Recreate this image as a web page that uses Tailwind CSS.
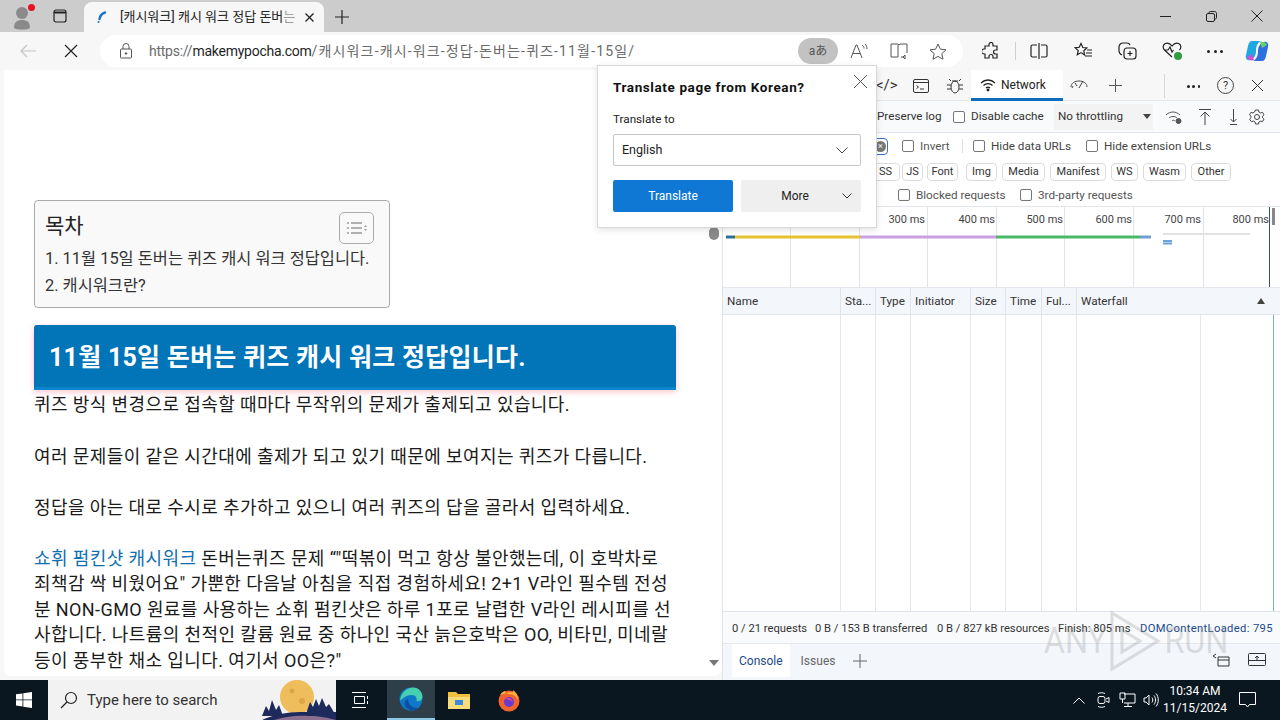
<!DOCTYPE html>
<html lang="ko">
<head>
<meta charset="UTF-8">
<title>캐시워크</title>
<script src="https://cdn.jsdelivr.net/npm/@tailwindcss/browser@4"></script>
</head>
<body class="w-[1280px] h-[720px] overflow-hidden relative flex flex-col bg-[#f7f7f7] font-['Roboto','Noto_Sans_CJK_KR',sans-serif]">

<!-- Tab strip -->
<div class="h-[32px] shrink-0 bg-[#cccccc] flex items-end relative">
  <div class="w-[84px] h-[32px] flex items-center pl-[10px] gap-[18px]">
    <div class="relative w-[24px] h-[24px]">
      <svg width="24" height="26" viewBox="0 0 24 26" fill="#8a8a8a"><circle cx="12" cy="9" r="6"/><path d="M4 24c0-6 3-8 8-8s8 2 8 8c-3 2-13 2-16 0z"/></svg>
      <span class="absolute top-0 right-[-1px] w-[7px] h-[7px] rounded-full bg-[#e81123]"></span>
    </div>
    <svg width="16" height="16" viewBox="0 0 16 16" fill="none" stroke="#222" stroke-width="1.2"><rect x="2" y="2" width="12" height="12" rx="2"/><path d="M2 4.500h12" stroke-width="2"/></svg>
  </div>
  <div class="w-[240px] h-[30px] bg-[#f7f7f7] rounded-t-[8px] flex items-center pl-[10px] pr-[9px]">
    <svg width="16" height="16" viewBox="0 0 16 16" fill="none" class="shrink-0"><path d="M5.500 10C6 7 8 4.500 11 3.500" stroke="#1a73c8" stroke-width="2.400" stroke-linecap="round"/><circle cx="4.500" cy="13" r="1" fill="#1a73c8"/></svg>
    <span class="ml-[10px] w-[176px] overflow-hidden whitespace-nowrap text-[13px] text-[#222]">[캐시워크] 캐시 워크 정답 돈버<span class="text-[#999]">는</span></span>
    <svg width="11" height="11" viewBox="0 0 11 11" stroke="#222" stroke-width="1.3" class="ml-[8px] shrink-0"><path d="M1.500 1.500l8 8M9.500 1.500l-8 8"/></svg>
  </div>
  <div class="w-[36px] h-[30px] flex items-center justify-center">
    <svg width="14" height="14" viewBox="0 0 14 14" stroke="#222" stroke-width="1.2"><path d="M7 0v14M0 7h14"/></svg>
  </div>
  <div class="ml-auto flex h-[32px]">
    <div class="w-[46px] flex items-center justify-center"><svg width="11" height="11" viewBox="0 0 11 11" stroke="#222"><path d="M0 5.500h11"/></svg></div>
    <div class="w-[46px] flex items-center justify-center"><svg width="11" height="11" viewBox="0 0 11 11" fill="none" stroke="#222"><rect x=".5" y="2.500" width="8" height="8" rx="1.500"/><path d="M3 2.500V1.800C3 1 3.500.5 4.300.5h4.200c1.200 0 2 .8 2 2v4.200c0 .8-.5 1.300-1.500 1.300"/></svg></div>
    <div class="w-[46px] flex items-center justify-center"><svg width="12" height="12" viewBox="0 0 12 12" stroke="#222"><path d="M.5.500l11 11M11.500.5l-11 11"/></svg></div>
  </div>
</div>

<!-- Address bar row -->
<div class="h-[38px] shrink-0 flex items-center bg-[#f7f7f7]">
  <div class="w-[56px] flex justify-center">
    <svg width="18" height="16" viewBox="0 0 18 16" fill="none" stroke="#c4c4c4" stroke-width="1.2"><path d="M17 8H2M8 2L2 8l6 6"/></svg>
  </div>
  <div class="w-[30px] flex justify-center">
    <svg width="14" height="14" viewBox="0 0 14 14" stroke="#222" stroke-width="1.2"><path d="M1 1l12 12M13 1L1 13"/></svg>
  </div>
  <div class="ml-[14px] w-[863px] h-[32px] rounded-full bg-white flex items-center pl-[19px] pr-[16px]">
    <svg width="14" height="16" viewBox="0 0 14 16" fill="none" stroke="#555" stroke-width="1"><rect x="1.500" y="6" width="11" height="9" rx="1"/><path d="M4 6V3.500a3 3 0 0 1 6 0V6"/><circle cx="7" cy="10.500" r=".8" fill="#555"/></svg>
    <span class="ml-[16px] text-[14px] whitespace-nowrap text-[#6b6b6b] tracking-[-0.25px]">https://<span class="text-[#1f1f1f]">makemypocha.com</span><span class="tracking-[1.150px]">/캐시워크-캐시-워크-정답-돈버는-퀴즈-11월-15일/</span></span>
    <div class="ml-auto w-[40px] h-[26px] rounded-full bg-[#c2c2c2] text-[12px] text-[#555] flex items-center justify-center">aあ</div>
    <svg class="ml-[12px]" width="18" height="16" viewBox="0 0 18 16" fill="none" stroke="#555"><path d="M1 15L6 2h1l5 13M3 10.500h7M12 2c1.500 1 2 2 2 3.500M15 1c1.500 1.500 2 3 2 5"/></svg>
    <svg class="ml-[22px]" width="18" height="16" viewBox="0 0 18 16" fill="none" stroke="#555"><path d="M1 1h7l1 1 1-1h7v9M1 1v13h7V2M11 14l2 0 2-2v4l-2-2"/></svg>
    <svg class="ml-[21px]" width="18" height="17" viewBox="0 0 18 17" fill="none" stroke="#555"><path d="M9 1l2.400 5.200 5.600.6-4.200 3.800 1.200 5.600L9 13.400 4 16.200l1.200-5.600L1 6.800l5.600-.6z"/></svg>
  </div>
  <div class="flex items-center ml-[19px] text-[#222]">
    <svg width="18" height="18" viewBox="0 0 18 18" fill="none" stroke="#222" stroke-width="1.2"><path d="M7 2.500a2 2 0 0 1 4 0V4h4v4h-1.500a2 2 0 0 0 0 4H15v4h-4v-1.500a2 2 0 0 0-4 0V16H3v-4H2a2.500 2.500 0 0 1 0-5h1V4h4z"/></svg>
    <span class="ml-[15px] w-px h-[18px] bg-[#d0d0d0]"></span>
    <svg class="ml-[14px]" width="18" height="16" viewBox="0 0 18 16" fill="none" stroke="#222" stroke-width="1.2"><path d="M9 0v16M7 2H2.500C1.500 2 1 2.500 1 3.500v9c0 1 .5 1.500 1.500 1.500H7M11 2h4.500c1 0 1.500.5 1.500 1.500v9c0 1-.5 1.500-1.500 1.500H11"/></svg>
    <svg class="ml-[26px]" width="19" height="18" viewBox="0 0 19 18" fill="none" stroke="#222" stroke-width="1.2"><path d="M7 1.500l1.800 4 4 .5-3 2.800.8 4.200L7 10.600 3.300 12.800l.9-4.200-3-2.800 4-.5zM13 8h5M12 11h6M11 14h7"/></svg>
    <svg class="ml-[25px]" width="19" height="18" viewBox="0 0 19 18" fill="none" stroke="#222" stroke-width="1.2"><rect x="6" y="6" width="12" height="11" rx="3"/><path d="M12 9v5M9.500 11.500h5M4 13C2 12 1 11 1 9V5c0-2 1.500-4 4-4h4c1.500 0 2.500.7 3 2"/></svg>
    <div class="ml-[25px] relative w-[20px] h-[18px]">
      <svg width="20" height="16" viewBox="0 0 20 16" fill="none" stroke="#222" stroke-width="1.2"><path d="M10 15L2.500 8C.5 6 .8 3 3 1.800 5.500.4 8 1.500 10 4c2-2.500 4.500-3.600 7-2.200C19.200 3 19.500 6 17.500 8M2 8h4l2-3 2 5 1.500-2"/></svg>
      <span class="absolute right-0 bottom-0 w-[8px] h-[8px] rounded-full bg-[#2e9e46]"></span>
    </div>
    <div class="ml-[25px] w-[16px] flex justify-between">
      <span class="w-[3px] h-[3px] rounded-full bg-[#222]"></span><span class="w-[3px] h-[3px] rounded-full bg-[#222]"></span><span class="w-[3px] h-[3px] rounded-full bg-[#222]"></span>
    </div>
    <svg class="ml-[22px]" width="24" height="24" viewBox="0 0 24 24"><path d="M7 2h9c-4 2-5 6-5 10s-2 8-6 9c-3 1-5-2-4-5l2-9c.5-3 2-5 4-5z" fill="#1ea7e0"/><path d="M17 22H8c4-2 5-6 5-10s2-8 6-9c3-1 5 2 4 5l-2 9c-.5 3-2 5-4 5z" fill="#2b6fe0"/><path d="M15 3c3-1 6 0 7 3l-5 3z" fill="#6ad06a"/><path d="M9 21c-3 1-6 0-7-3l5-3z" fill="#d04fd8"/></svg>
  </div>
</div>

<!-- Main area -->
<div class="flex-1 min-h-0 flex">

  <!-- Web page -->
  <div class="w-[722px] pl-[4px] pb-[4px] shrink-0 flex">
    <div class="flex-1 bg-white rounded-b-[8px] flex overflow-hidden">
      <article class="w-[702px] shrink-0 pl-[30px] pr-[30px] pt-[130px] text-[18px] tracking-[0.4px] leading-[25.5px] text-[#1a1a1a]">
        <nav class="w-[356px] h-[108px] bg-[#f9f9f9] border border-[#aaaaaa] rounded-[4px] pl-[10px] pr-[15px] pt-[11px] tracking-normal">
          <div class="flex items-start justify-between h-[33px]">
            <span class="text-[21px] leading-[28px] text-[#222]">목차</span>
            <span class="w-[35px] h-[32px] border border-[#aaaaaa] rounded-[5px] flex items-center justify-center gap-[3px]">
              <svg width="20" height="14" viewBox="0 0 20 14" stroke="#999" stroke-width="1.400"><path d="M0 2h2M4 2h11M0 7h2M4 7h11M0 12h2M4 12h11"/><path d="M17 6l1.500-2L20 6zM17 8l1.500 2L20 8z" fill="#999" stroke="none"/></svg>
            </span>
          </div>
          <div class="text-[16.400px] leading-[27px] text-[#333] whitespace-nowrap">
            <div>1. 11월 15일 돈버는 퀴즈 캐시 워크 정답입니다.</div>
            <div>2. 캐시워크란?</div>
          </div>
        </nav>
        <h2 class="mt-[17px] h-[65px] bg-[#0274b8] border-b-[3px] border-[#0a86cf] rounded-t-[3px] pl-[15px] pt-[4px] flex items-center text-white font-bold text-[25px] tracking-[0.25px] shadow-[0_2px_6px_rgba(255,90,120,0.35)] whitespace-nowrap">11월 15일 돈버는 퀴즈 캐시 워크 정답입니다.</h2>
        <p class="pt-[2px] whitespace-nowrap">퀴즈 방식 변경으로 접속할 때마다 무작위의 문제가 출제되고 있습니다.</p>
        <p class="mt-[26px] whitespace-nowrap">여러 문제들이 같은 시간대에 출제가 되고 있기 때문에 보여지는 퀴즈가 다릅니다.</p>
        <p class="mt-[25.5px] whitespace-nowrap">정답을 아는 대로 수시로 추가하고 있으니 여러 퀴즈의 답을 골라서 입력하세요.</p>
        <p class="mt-[25.5px] whitespace-nowrap"><a href="#" class="text-[#0f6fb0]">쇼휘 펌킨샷 캐시워크</a> 돈버는퀴즈 문제 “"떡볶이 먹고 항상 불안했는데, 이 호박차로<br>죄책감 싹 비웠어요" 가뿐한 다음날 아침을 직접 경험하세요! 2+1 V라인 필수템 전성<br>분 NON-GMO 원료를 사용하는 쇼휘 펌킨샷은 하루 1포로 날렵한 V라인 레시피를 선<br>사합니다. 나트륨의 천적인 칼륨 원료 중 하나인 국산 늙은호박은 OO, 비타민, 미네랄<br>등이 풍부한 채소 입니다. 여기서 OO은?"</p>
      </article>
      <!-- Page scrollbar -->
      <div class="w-[15px] shrink-0 flex flex-col items-center relative">
        <div class="mt-[157px] w-[10px] h-[13px] rounded-[5px] bg-[#8a8a8a]"></div>
        <div class="mt-auto mb-[10px] w-0 h-0 border-x-[5px] border-x-transparent border-t-[6px] border-t-[#777]"></div>
      </div>
    </div>
  </div>

  <!-- DevTools -->
  <div class="flex-1 min-w-0 flex flex-col text-[11.700px] text-[#333] border-l border-[#dfe3ea]">
    <!-- panel tabs -->
    <div class="h-[31px] shrink-0 flex items-center bg-[#f7f7f7] relative border-b border-[#e3e6ec]">
      <span class="ml-[153px] text-[15px] text-[#333]">&lt;/&gt;</span>
      <svg class="absolute left-[190px] top-[8px]" width="16" height="16" viewBox="0 0 16 16" fill="none" stroke="#333"><rect x=".5" y="1.500" width="15" height="13" rx="1.500"/><path d="M.5 4.500h15M3.500 7.500l2 1.500-2 1.500M7 11h4"/></svg>
      <svg class="absolute left-[223px] top-[7px]" width="18" height="18" viewBox="0 0 18 18" fill="none" stroke="#333"><ellipse cx="9" cy="10" rx="4" ry="6"/><path d="M6 4h6M5 8H1M5 12H1M13 8h4M13 12h4M5 4L3 2M13 4l2-2"/></svg>
      <div class="absolute left-[248px] top-0 w-[92px] h-[31px] bg-white border-b-[3px] border-[#0f6cbd] flex items-center pl-[9px] pt-[1px] gap-[5px]">
        <svg width="16" height="14" viewBox="0 0 16 14" fill="none" stroke="#222" stroke-width="1.300"><path d="M1 5c4-4 10-4 14 0M3.500 7.500c2.500-2.500 6.500-2.500 9 0M6 10c1-1 3-1 4 0"/><circle cx="8" cy="12" r=".8" fill="#222"/></svg>
        <span class="text-[#222] text-[12px]">Network</span>
      </div>
      <svg class="absolute left-[347px] top-[8px]" width="18" height="14" viewBox="0 0 18 14" fill="none" stroke="#444"><path d="M1 9c0-8 16-8 16 0M9 10l4-7M5 5l2 3M3 8l-1 2"/></svg>
      <svg class="absolute left-[386px] top-[9px]" width="13" height="13" viewBox="0 0 13 13" stroke="#555"><path d="M6.500 0v13M0 6.500h13"/></svg>
      <span class="absolute left-[441px] top-[4px] w-px h-[24px] bg-[#d5d8de]"></span>
      <div class="absolute left-[464px] top-[15px] w-[13px] flex justify-between">
        <span class="w-[2.500px] h-[2.500px] rounded-full bg-[#222]"></span><span class="w-[2.500px] h-[2.500px] rounded-full bg-[#222]"></span><span class="w-[2.500px] h-[2.500px] rounded-full bg-[#222]"></span>
      </div>
      <div class="absolute left-[494px] top-[7px] w-[17px] h-[17px] rounded-full border border-[#444] text-[11px] leading-[15px] text-center">?</div>
      <svg class="absolute left-[529px] top-[10px]" width="11" height="11" viewBox="0 0 11 11" stroke="#333"><path d="M0 0l11 11M11 0L0 11"/></svg>
    </div>
    <!-- record row -->
    <div class="h-[32px] shrink-0 flex items-center bg-[#f9fafc] border-b border-[#e3e6ec] whitespace-nowrap">
      <span class="ml-[154px] w-[64px] pt-[1px]">Preserve log</span>
      <span class="ml-[12px] w-[12px] h-[12px] border border-[#777] rounded-[2px] bg-white"></span>
      <span class="ml-[6px] w-[73px] pt-[1px]">Disable cache</span>
      <span class="ml-[10px] w-[99px] h-[26px] bg-[#f3f3f3] pl-[4px] pt-[1px] flex items-center">No throttling</span>
      <span class="w-0 h-0 -ml-[10px] border-x-[4px] border-x-transparent border-t-[5px] border-t-[#444]"></span>
      <svg class="ml-[14px]" width="18" height="14" viewBox="0 0 18 14" fill="none" stroke="#555"><path d="M1 5c4-4 10-4 14 0M4 8c2-2 6-2 8 0M7 11c1-1 2-1 3 0"/><circle cx="13.500" cy="11" r="2.500" fill="#555"/></svg>
      <svg class="ml-[16px]" width="12" height="16" viewBox="0 0 12 16" fill="none" stroke="#444"><path d="M0 .5h12M6 16V3M1.500 7.500L6 3l4.500 4.500"/></svg>
      <svg class="ml-[16px]" width="12" height="16" viewBox="0 0 12 16" fill="none" stroke="#444"><path d="M3 15.500h7M6.500 0v13M3.500 10l3 3 3-3"/></svg>
      <svg class="ml-[10px]" width="16" height="16" viewBox="0 0 16 16" fill="none" stroke="#444"><circle cx="8" cy="8" r="2.500"/><path d="M6.500 1h3l.4 2 1.800 1 1.800-.7 1.500 2.500-1.500 1.400v1.600l1.500 1.400-1.500 2.500-1.800-.7-1.800 1-.4 2h-3l-.4-2-1.800-1-1.800.7L.5 10.200 2 8.800V7.200L.5 5.800 2 3.300l1.800.7 1.800-1z"/></svg>
    </div>
    <!-- filter row -->
    <div class="h-[26px] shrink-0 flex items-center bg-white relative whitespace-nowrap text-[#444]">
      <div class="absolute left-[150px] top-[5px] w-[15px] h-[17px] border border-[#3b6fc4] rounded-[4px] flex items-center justify-end pr-[1px]">
        <span class="w-[11px] h-[11px] rounded-full bg-[#777] text-white text-[9px] leading-[11px] text-center">×</span>
      </div>
      <span class="ml-[179px] w-[12px] h-[12px] border border-[#777] rounded-[2px]"></span>
      <span class="ml-[6px] w-[30px] pt-[1px] text-[#555]">Invert</span>
      <span class="ml-[12px] w-px h-[14px] bg-[#e0e0e0]"></span>
      <span class="ml-[10px] w-[12px] h-[12px] border border-[#777] rounded-[2px]"></span>
      <span class="ml-[6px] w-[80px] pt-[1px]">Hide data URLs</span>
      <span class="ml-[15px] w-[12px] h-[12px] border border-[#777] rounded-[2px]"></span>
      <span class="ml-[6px] pt-[1px]">Hide extension URLs</span>
    </div>
    <!-- type chips -->
    <div class="h-[25px] shrink-0 flex items-center bg-white pl-[140px] pt-[1px] text-[11px] whitespace-nowrap text-[#333]">
      <span class="w-[37px] h-[18px] pr-[7px] flex items-center justify-end border border-[#dcdcdc] rounded-[4px]">SS</span>
      <span class="ml-[2px] w-[21px] h-[18px] flex items-center justify-center border border-[#dcdcdc] rounded-[4px]">JS</span>
      <span class="ml-[4px] w-[31px] h-[18px] flex items-center justify-center border border-[#dcdcdc] rounded-[4px]">Font</span>
      <span class="ml-[8px] w-[31px] h-[18px] flex items-center justify-center border border-[#dcdcdc] rounded-[4px]">Img</span>
      <span class="ml-[5px] w-[43px] h-[18px] flex items-center justify-center border border-[#dcdcdc] rounded-[4px]">Media</span>
      <span class="ml-[5px] w-[56px] h-[18px] flex items-center justify-center border border-[#dcdcdc] rounded-[4px]">Manifest</span>
      <span class="ml-[5px] w-[27px] h-[18px] flex items-center justify-center border border-[#dcdcdc] rounded-[4px]">WS</span>
      <span class="ml-[5px] w-[43px] h-[18px] flex items-center justify-center border border-[#dcdcdc] rounded-[4px]">Wasm</span>
      <span class="ml-[5px] w-[40px] h-[18px] flex items-center justify-center border border-[#dcdcdc] rounded-[4px]">Other</span>
    </div>
    <!-- blocked row -->
    <div class="h-[23px] shrink-0 flex items-center bg-white whitespace-nowrap border-b border-[#e3e6ec] text-[#555]">
      <span class="ml-[175px] w-[12px] h-[12px] border border-[#777] rounded-[2px]"></span>
      <span class="ml-[6px] w-[89px] pt-[1px]">Blocked requests</span>
      <span class="ml-[15px] w-[12px] h-[12px] border border-[#777] rounded-[2px]"></span>
      <span class="ml-[6px] pt-[1px]">3rd-party requests</span>
    </div>
    <!-- timeline overview -->
    <div class="h-[81px] shrink-0 relative bg-white border-b border-[#e3e6ec] overflow-hidden">
      <svg width="557" height="81" viewBox="0 0 557 81" fill="none" class="absolute left-0 top-0">
        <g stroke="#e0e3ea"><path d="M67.500 0v81M136.500 0v81M204.500 0v81M273.500 0v81M341.500 0v81M410.500 0v81M480.500 0v81"/></g>
        <path d="M546.500 0v81" stroke="#3a4f7a"/>
        <path d="M3 30h9" stroke="#2f6f94" stroke-width="3"/>
        <path d="M12 30h125" stroke="#e6c22e" stroke-width="3"/>
        <path d="M137 30h136" stroke="#c9a0e0" stroke-width="3"/>
        <path d="M273 30h144" stroke="#4cb86a" stroke-width="3"/>
        <path d="M417 30h11" stroke="#6f9fd0" stroke-width="3"/>
        <path d="M440 34h9M440 36.500h9" stroke="#6aa0dc" stroke-width="2"/>
        <path d="M440 27h87" stroke="#e2e2e2" stroke-width="2"/>
        <rect x="549" y="1" width="3" height="17" fill="#888"/>
      </svg>
      <div class="absolute inset-0 text-[11px] text-[#444]">
        <span class="absolute right-[355px] top-[5px]">300 ms</span>
        <span class="absolute right-[285px] top-[5px]">400 ms</span>
        <span class="absolute right-[217px] top-[5px]">500 ms</span>
        <span class="absolute right-[148px] top-[5px]">600 ms</span>
        <span class="absolute right-[79px] top-[5px]">700 ms</span>
        <span class="absolute right-[11px] top-[5px]">800 ms</span>
      </div>
    </div>
    <!-- table header -->
    <div class="h-[27px] shrink-0 flex items-center bg-[#f3f6fb] border-b border-[#dfe3ea] text-[#333] whitespace-nowrap">
      <span class="w-[118px] pl-[4px] pt-[1px] h-full flex items-center border-r border-[#dfe3ea]">Name</span>
      <span class="w-[35px] pl-[4px] pt-[1px] h-full flex items-center border-r border-[#dfe3ea]">Sta...</span>
      <span class="w-[35px] pl-[4px] pt-[1px] h-full flex items-center border-r border-[#dfe3ea]">Type</span>
      <span class="w-[60px] pl-[4px] pt-[1px] h-full flex items-center border-r border-[#dfe3ea]">Initiator</span>
      <span class="w-[35px] pl-[4px] pt-[1px] h-full flex items-center border-r border-[#dfe3ea]">Size</span>
      <span class="w-[36px] pl-[4px] pt-[1px] h-full flex items-center border-r border-[#dfe3ea]">Time</span>
      <span class="w-[35px] pl-[4px] pt-[1px] h-full flex items-center border-r border-[#dfe3ea]">Ful...</span>
      <span class="flex-1 pl-[4px] pt-[1px]">Waterfall</span>
      <span class="mr-[15px] w-0 h-0 border-x-[4px] border-x-transparent border-b-[6px] border-b-[#444]"></span>
    </div>
    <!-- table body -->
    <div class="flex-1 min-h-0 flex bg-white border-b border-[#dfe3ea]">
      <span class="w-[118px] border-r border-[#e4e7ee]"></span>
      <span class="w-[35px] border-r border-[#e4e7ee]"></span>
      <span class="w-[35px] border-r border-[#e4e7ee]"></span>
      <span class="w-[60px] border-r border-[#e4e7ee]"></span>
      <span class="w-[35px] border-r border-[#e4e7ee]"></span>
      <span class="w-[36px] border-r border-[#e4e7ee]"></span>
      <span class="w-[35px] border-r border-[#e4e7ee]"></span>
      <span class="w-[124px] border-r border-[#e4e7ee]"></span>
      <span class="w-[73px] border-r border-[#7fa8d8]"></span>
    </div>
    <!-- status bar -->
    <div class="h-[32px] shrink-0 flex items-center gap-[8px] pl-[9px] pt-[3px] bg-[#f9fafc] border-b border-[#e3e6ec] whitespace-nowrap text-[11.200px] overflow-hidden">
      <span class="w-[75px]">0 / 21 requests</span><span class="w-[114px]">0 B / 153 B transferred</span><span class="w-[113px]">0 B / 827 kB resources</span><span class="w-[74px]">Finish: 805 ms</span><span class="text-[#1a4a8a] tracking-[0.35px]">DOMContentLoaded: 795</span>
    </div>
    <!-- drawer tabs -->
    <div class="h-[36px] shrink-0 flex items-center bg-[#f3f6fb] relative pb-[3px]">
      <span class="ml-[9px] h-[33px] px-[7px] flex items-center bg-white text-[#1a4a8a] text-[12px]">Console</span>
      <span class="ml-[11px] text-[#666] text-[12px]">Issues</span>
      <svg class="ml-[18px]" width="14" height="14" viewBox="0 0 14 14" stroke="#666"><path d="M7 0v14M0 7h14"/></svg>
      <svg class="absolute left-[489px] top-[8px]" width="18" height="15" viewBox="0 0 18 15" fill="none" stroke="#333"><path d="M6 5h11v9H6zM6 8h11M4 2L1 4l3 2"/></svg>
      <svg class="absolute left-[525px] top-[8px]" width="18" height="15" viewBox="0 0 18 15" fill="none" stroke="#333"><rect x=".5" y="1.500" width="17" height="12" rx="1"/><path d="M.5 8.500h17M9 8V4M7 6l2-2 2 2"/></svg>
    </div>
  </div>
</div>

<!-- Taskbar -->
<div class="h-[40px] shrink-0 bg-[#0a1720] flex items-stretch text-white">
  <div class="w-[48px] flex items-center justify-center">
    <svg width="16" height="16" viewBox="0 0 16 16" fill="#fff"><path d="M0 2.300l6.500-.9v6.100H0zM7.300 1.300L16 0v7.500H7.300zM0 8.300h6.500v6.200L0 13.600zM7.300 8.300H16V16l-8.700-1.200z"/></svg>
  </div>
  <div class="w-[288px] bg-[#f2f2f2] flex items-center relative overflow-hidden">
    <svg class="ml-[12px]" width="18" height="18" viewBox="0 0 18 18" fill="none" stroke="#222" stroke-width="1.2"><circle cx="11" cy="7" r="5.500"/><path d="M7 11l-6 6"/></svg>
    <span class="ml-[9px] text-[15px] text-[#333] whitespace-nowrap">Type here to search</span>
    <svg class="absolute left-[204px] top-0" width="84" height="40" viewBox="0 0 84 40">
      <circle cx="45" cy="17" r="17" fill="#efbd5c"/>
      <circle cx="40" cy="11" r="2.500" fill="#dca548"/><circle cx="50" cy="21" r="3" fill="#dca548"/>
      <path d="M10 36l4-10 3 5 3-11 4 10 3-5 4 11z" fill="#1e2a5c"/>
      <path d="M54 34l4-12 3 5 3-8 3 7 3-8 4 9 3-3 6 10z" fill="#1e2a5c"/>
      <path d="M10 40c10-5 25-8 38-8 14 0 26 0 36 0v8z" fill="#1e2a5c"/>
      <path d="M22 40c10-3 22-5 34-4 12 0 20 2 28 4z" fill="#8a6f8e"/>
    </svg>
  </div>
  <div class="w-[48px] flex items-center justify-center">
    <svg width="18" height="16" viewBox="0 0 18 16" fill="none" stroke="#fff"><path d="M1 .5h14M1 15.500h14M3.500 4.500h10v7h-10zM16.500 4v3M16.500 9v3"/></svg>
  </div>
  <div class="ml-[3px] w-[48px] bg-[#2f3f4a] border-b-[2px] border-[#8cc8e8] flex items-center justify-center">
    <svg width="24" height="24" viewBox="0 0 24 24"><circle cx="12" cy="12" r="11.500" fill="#0f78c8"/><path d="M1 13C2 5 9 .5 14 .5c6 0 9.500 5 9.500 9 0 4-3.500 5.500-6 4.500 1-3-1-6-5-6-5 0-8 3-11.500 5.500z" fill="#46d0b0"/><path d="M9 12c0 6 5 9 9 9 1 0 2-.5 2-.5-3 3-8 3.500-11 1.500-4-2-5-8 0-10z" fill="#0a4fa0"/></svg>
  </div>
  <div class="w-[48px] flex items-center justify-center">
    <svg width="24" height="20" viewBox="0 0 24 20"><path d="M1 2h8l2 2h12v15H1z" fill="#f2c23e"/><path d="M1 7h22v12H1z" fill="#f9dd7a"/><path d="M8 10h8v5H8z" fill="#3b8ad8"/></svg>
  </div>
  <div class="ml-[2px] w-[48px] flex items-center justify-center">
    <svg width="24" height="24" viewBox="0 0 24 24"><circle cx="12" cy="13" r="10.500" fill="#f2622e"/><path d="M3 7c2-3 4-4 5-4 0 2 2 3 4 3 4 0 7 2 9 6 0-4-2-8-5-10 1 3-1 3-3 2z" fill="#ffb23a"/><circle cx="12" cy="14" r="5" fill="#6a3ad0"/><path d="M8 10c3-1 7 0 8 4-3-2-5-2-8-4z" fill="#e8459c"/></svg>
  </div>
  <div class="ml-auto flex items-center mr-[13px]">
    <svg class="mr-[10px]" width="12" height="7" viewBox="0 0 12 7" fill="none" stroke="#fff"><path d="M.5 6.500L6 1l5.500 5.500"/></svg>
    <svg class="mr-[8px]" width="16" height="16" viewBox="0 0 16 16" fill="none" stroke="#fff"><rect x="3" y="4.500" width="7" height="7" rx="2"/><path d="M11 7l3-1.500v5L11 9M3 1.500c2-1 5-1 7 0M3 14.500c2 1 5 1 7 0"/></svg>
    <svg class="mr-[7px]" width="17" height="16" viewBox="0 0 17 16" fill="none" stroke="#fff"><path d="M5 2h11v9H5M1 1h5v6H1zM3.500 7v4M9 11v3M5 14.500h8"/></svg>
    <svg width="16" height="16" viewBox="0 0 16 16" fill="none" stroke="#fff"><path d="M1 6v4h2l3 3V3L3 6zM9 5.500c1 1.500 1 3.500 0 5M11 3.500c2 2.500 2 6.500 0 9M13 1.500c3 3.500 3 9.500 0 13"/></svg>
    <div class="ml-[4px] w-[64px] text-[12px] leading-[17px] text-center">
      <div>10:34 AM</div>
      <div>11/15/2024</div>
    </div>
    <div class="w-[40px] flex items-center justify-center">
      <svg width="17" height="16" viewBox="0 0 17 16" fill="none" stroke="#fff"><path d="M.5.500h16v12h-6l-2 2.500-2-2.500h-6z"/></svg>
    </div>
  </div>
</div>

<!-- Translate popup -->
<div class="absolute left-[597px] top-[65px] w-[280px] h-[163px] bg-white border border-[#d8d8d8] shadow-[0_2px_6px_rgba(0,0,0,0.12)] pl-[15px] pr-[15px]">
  <svg class="absolute right-[9px] top-[9px]" width="13" height="13" viewBox="0 0 13 13" stroke="#555"><path d="M0 0l13 13M13 0L0 13"/></svg>
  <div class="mt-[12px] text-[13.500px] tracking-[0.6px] leading-[18px] font-bold text-[#111] whitespace-nowrap">Translate page from Korean?</div>
  <div class="mt-[15px] text-[11.700px] leading-[16px] text-[#222]">Translate to</div>
  <div class="mt-[7px] h-[32px] border border-[#c8c8c8] rounded-[2px] flex items-center pl-[8px] pr-[12px] text-[12.500px] text-[#222]">
    English
    <svg class="ml-auto" width="12" height="7" viewBox="0 0 12 7" fill="none" stroke="#444"><path d="M.5.500L6 6l5.500-5.500"/></svg>
  </div>
  <div class="mt-[14px] flex gap-[8px] text-[12px]">
    <div class="w-[120px] h-[32px] rounded-[2px] bg-[#0f78d4] text-white flex items-center justify-center">Translate</div>
    <div class="w-[120px] h-[32px] rounded-[2px] bg-[#efefef] text-[#222] flex items-center relative justify-center pr-[12px]">
      More
      <svg class="absolute right-[9px] top-[13px]" width="10" height="6" viewBox="0 0 10 6" fill="none" stroke="#333"><path d="M.5.500L5 5l4.500-4.500"/></svg>
    </div>
  </div>
</div>

<!-- Watermark -->
<div class="absolute left-[1041px] top-[610px] h-[62px] flex items-center pointer-events-none text-[#888]/25 text-[36px] leading-none">
  <span class="w-[56px] text-center scale-x-90">ANY</span>
  <svg class="ml-[12px]" width="52" height="62" viewBox="0 0 52 62" fill="none" stroke="#888" stroke-opacity=".25" stroke-width="3"><path d="M3 3v56l46-28zM13 20v22l18-11z"/></svg>
  <span class="w-[68px] text-center scale-x-90">RUN</span>
</div>
</body>
</html>
